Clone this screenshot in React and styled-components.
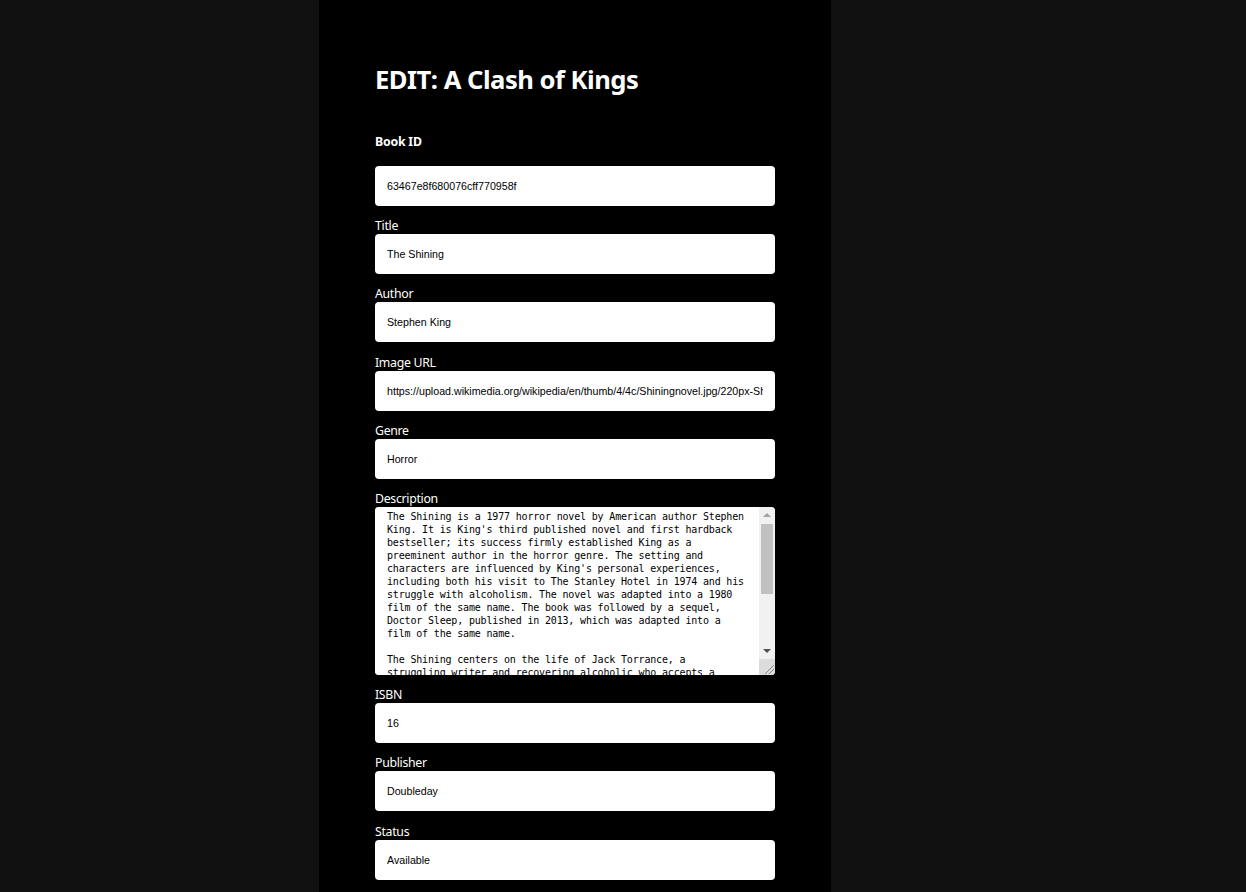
import React from 'react'
import styled, { createGlobalStyle } from 'styled-components'

const GlobalStyle = createGlobalStyle`
  html, body {
    margin: 0;
    padding: 0;
    background-color: #111111;
  }
  body {
    font-family: "Noto Sans", "Open Sans", sans-serif;
    color: #ffffff;
  }
`;

const description = `The Shining is a 1977 horror novel by American author Stephen King. It is King's third published novel and first hardback bestseller; its success firmly established King as a preeminent author in the horror genre. The setting and characters are influenced by King's personal experiences, including both his visit to The Stanley Hotel in 1974 and his struggle with alcoholism. The novel was adapted into a 1980 film of the same name. The book was followed by a sequel, Doctor Sleep, published in 2013, which was adapted into a film of the same name.

The Shining centers on the life of Jack Torrance, a struggling writer and recovering alcoholic who accepts a position as the off-season caretaker of the historic Overlook Hotel in the Colorado Rockies. His family accompanies him on this job, including his young son Danny Torrance, who possesses "the shining", an array of psychic abilities that allow Danny to see the hotel's horrific past. Soon, after a winter storm leaves them snowbound, the supernatural forces inhabiting the hotel influence Jack's sanity, leaving his wife and son in incredible danger.`

const fields = [
    { label: 'Title', value: 'The Shining' },
    { label: 'Author', value: 'Stephen King' },
    { label: 'Image URL', value: 'https://upload.wikimedia.org/wikipedia/en/thumb/4/4c/Shiningnovel.jpg/220px-Shiningnovel.jpg' },
    { label: 'Genre', value: 'Horror' },
    { label: 'Description', value: description, multiline: true },
    { label: 'ISBN', value: '16' },
    { label: 'Publisher', value: 'Doubleday' },
    { label: 'Status', value: 'Available' },
]

const Grip = () => (
    <svg width="16" height="16" viewBox="0 0 16 16">
        <line x1="6" y1="15" x2="15" y2="6" stroke="#8a8a8a" strokeWidth="1" />
        <line x1="10" y1="15" x2="15" y2="10" stroke="#8a8a8a" strokeWidth="1" />
    </svg>
)

const DescriptionBox = ({ value }) => (
    <TextBox>
        <TextArea defaultValue={value} />
        <ScrollBar>
            <ArrowButton>
                <Arrow $up />
            </ArrowButton>
            <Track>
                <Thumb />
            </Track>
            <ArrowButton>
                <Arrow />
            </ArrowButton>
            <Corner>
                <Grip />
            </Corner>
        </ScrollBar>
    </TextBox>
)

const App = () => {
    return (
        <Page>
            <GlobalStyle />
            <Column>
                <Heading>EDIT: A Clash of Kings</Heading>
                <Form onSubmit={(e) => e.preventDefault()}>
                    <IdLabel>Book ID</IdLabel>
                    <Field>
                        <Input defaultValue="63467e8f680076cff770958f" readOnly />
                    </Field>
                    {fields.map((f) => (
                        <Field key={f.label}>
                            <Label>{f.label}</Label>
                            {f.multiline
                                ? <DescriptionBox value={f.value} />
                                : <Input defaultValue={f.value} />}
                        </Field>
                    ))}
                </Form>
            </Column>
        </Page>
    )
}

const Page = styled.div`
display: grid;
grid-template-columns: 319px 512px 1fr;
min-height: 100vh;
background-color: #111111;
`;

const Column = styled.main`
grid-column: 2;
background-color: #000000;
padding: 64px 56px 40px;
display: flex;
flex-direction: column;
`;

const Heading = styled.h1`
margin: 0;
font-size: 25.6px;
line-height: 32px;
letter-spacing: -0.5px;
font-weight: 700;
color: #ffffff;
`;

const Form = styled.form`
display: flex;
flex-direction: column;
margin-top: 38px;
`;

const IdLabel = styled.div`
font-size: 12.3px;
line-height: 16px;
letter-spacing: -0.2px;
font-weight: 700;
margin-bottom: 16px;
`;

const Field = styled.div`
display: flex;
flex-direction: column;
margin-bottom: 10.2px;
`;

const Label = styled.label`
font-size: 12.3px;
line-height: 16px;
letter-spacing: -0.3px;
padding-top: 2px;
color: #ffffff;
`;

const Input = styled.input`
box-sizing: border-box;
height: 40px;
width: 100%;
border: none;
border-radius: 4px;
padding: 0 12px;
background: #ffffff;
color: #000000;
font-family: "Liberation Sans", Arial, sans-serif;
font-size: 10.67px;
outline: none;
`;

const TextBox = styled.div`
display: flex;
height: 168px;
border-radius: 4px;
overflow: hidden;
background: #ffffff;
`;

const TextArea = styled.textarea`
flex: 1;
min-width: 0;
box-sizing: border-box;
height: 100%;
border: none;
padding: 3px 12px;
background: #ffffff;
color: #000000;
font-family: "DejaVu Sans Mono", monospace;
font-size: 10px;
letter-spacing: -0.17px;
line-height: 13px;
outline: none;
resize: none;
overflow-y: scroll;
scrollbar-width: none;
&::-webkit-scrollbar {
    display: none;
}
`;

const ScrollBar = styled.div`
width: 16px;
flex-shrink: 0;
display: flex;
flex-direction: column;
background: #f1f1f1;
`;

const ArrowButton = styled.div`
height: 16px;
display: flex;
align-items: center;
justify-content: center;
`;

const Arrow = styled.span`
width: 0;
height: 0;
border-left: 4px solid transparent;
border-right: 4px solid transparent;
${(p) => p.$up
        ? 'border-bottom: 4px solid #a3a3a3;'
        : 'border-top: 4px solid #505050;'}
`;

const Track = styled.div`
flex: 1;
padding: 1px 2px 0;
`;

const Thumb = styled.div`
height: 70px;
background: #c1c1c1;
`;

const Corner = styled.div`
height: 16px;
background: #dcdcdc;
display: flex;
`;

export default App
